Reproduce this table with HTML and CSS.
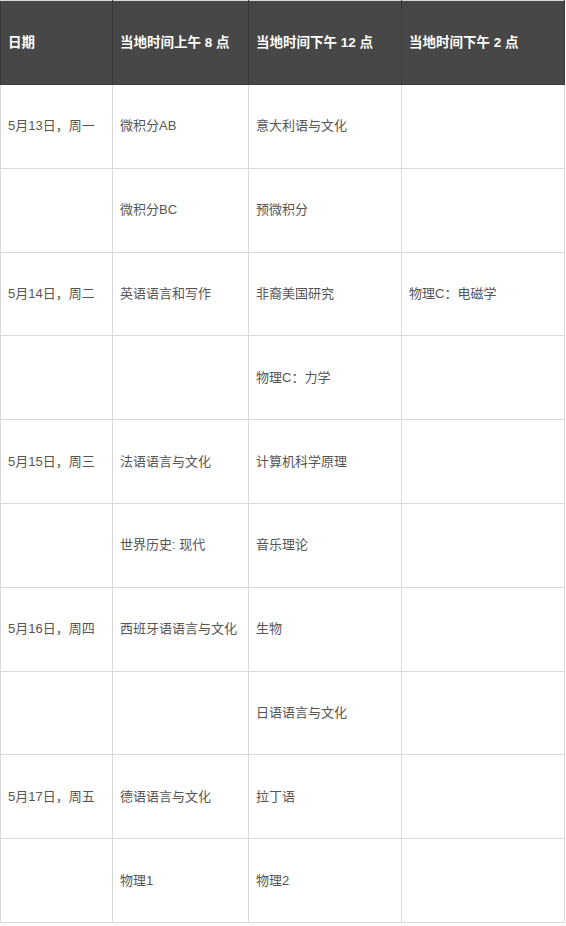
FILE: index.html
```html
<!DOCTYPE html>
<html lang="zh-CN">
<head>
<meta charset="utf-8">
<link rel="stylesheet" href="styles.css">
</head>
<body>
<table class="schedule">
  <colgroup>
    <col class="c1"><col class="c2"><col class="c3"><col class="c4">
  </colgroup>
  <thead>
    <tr><th>日期</th><th>当地时间上午 8 点</th><th>当地时间下午 12 点</th><th>当地时间下午 2 点</th></tr>
  </thead>
  <tbody>
    <tr><td>5月13日，周一</td><td>微积分AB</td><td>意大利语与文化</td><td></td></tr>
    <tr><td></td><td>微积分BC</td><td>预微积分</td><td></td></tr>
    <tr><td>5月14日，周二</td><td>英语语言和写作</td><td>非裔美国研究</td><td>物理C：电磁学</td></tr>
    <tr><td></td><td></td><td>物理C：力学</td><td></td></tr>
    <tr><td>5月15日，周三</td><td>法语语言与文化</td><td>计算机科学原理</td><td></td></tr>
    <tr><td></td><td>世界历史: 现代</td><td>音乐理论</td><td></td></tr>
    <tr><td>5月16日，周四</td><td>西班牙语语言与文化</td><td>生物</td><td></td></tr>
    <tr><td></td><td></td><td>日语语言与文化</td><td></td></tr>
    <tr><td>5月17日，周五</td><td>德语语言与文化</td><td>拉丁语</td><td></td></tr>
    <tr><td></td><td>物理1</td><td>物理2</td><td></td></tr>
  </tbody>
</table>
</body>
</html>
```

FILE: styles.css
```css
html, body {
  margin: 0;
  padding: 0;
  background: #fff;
}
.schedule {
  border-collapse: collapse;
  width: 564px;
  table-layout: fixed;
  font-family: "Liberation Sans", "Noto Sans CJK SC", sans-serif;
  font-size: 13px;
  line-height: 18px;
}
.c1 { width: 112px; }
.c2 { width: 136px; }
.c3 { width: 153px; }
.c4 { width: 163px; }
.schedule th,
.schedule td {
  border: 1px solid #d9d9d9;
  padding: 0 7px;
  height: 82.8px;
  vertical-align: middle;
  text-align: left;
  white-space: nowrap;
  overflow: hidden;
}
.schedule th {
  background: #474747;
  color: #fff;
  font-weight: bold;
  font-size: 13.5px;
  border-color: #3a3a3a;
  border-top-color: #d9d9d9;
  height: 83px;
}
.schedule td {
  color: #555;
}
```
